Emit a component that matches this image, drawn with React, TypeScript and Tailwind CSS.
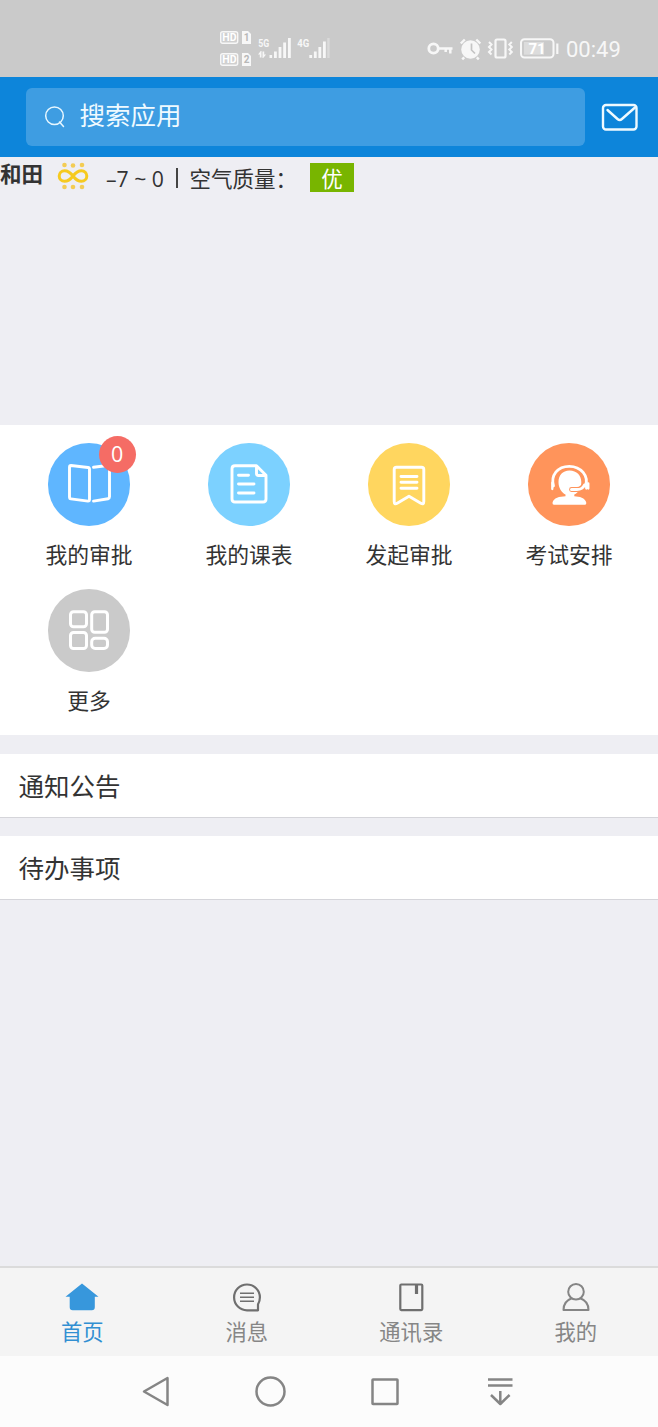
import React from 'react';

const Signals: React.FC = () => (
  <svg viewBox="218 28 114 40" width={114} height={40} fill="#f7f7f7" fontFamily="Roboto, sans-serif" fontWeight={700}>
    {[31, 53].map((y, i) => (
      <g key={y}>
        <rect x={220.7} y={y + 0.7} width={17} height={11.6} rx={2} fill="#d0d0d0" stroke="#f7f7f7" strokeWidth={1.4} />
        <text x={222.3} y={y + 10.4} fontSize={10.5} fill="#fff">HD</text>
        <path d={`M242 ${y}h6l3 3v10h-9z`} />
        <text x={243.7} y={y + 10.4} fontSize={10} fill="#b8b8b8">{i + 1}</text>
      </g>
    ))}
    <text x={258.3} y={46.5} fontSize={10.5} textLength={11} lengthAdjust="spacingAndGlyphs">5G</text>
    <text x={297.3} y={46.5} fontSize={10.5} textLength={12} lengthAdjust="spacingAndGlyphs">4G</text>
    <path d="M258 54.500l2.700-3.500h.8v6.500h-1.700v-3zM262.500 51.500h1.700v3h1.900l-2.900 3.500h-.7z" />
    <path d="M269.5 55h2.600v3h-2.600zM274 51.500h2.800V58H274zM278.600 47h2.800v11h-2.800zM283.200 42.500h2.800V58h-2.800zM288 38h2.800v20H288z" />
    <path d="M309.300 55h2.800v3h-2.800zM313.900 51.500h2.800V58h-2.800zM318.400 47h2.800v11h-2.800zM323 41.500h2.800V58H323z" />
    <path d="M327.200 38h2.400v20h-2.400z" fill="#dadada" />
  </svg>
);

const DeviceIcons: React.FC = () => (
  <svg viewBox="426 36 136 26" width={136} height={26} fill="none" stroke="#f7f7f7" strokeWidth={2.2}>
    <circle cx={433.5} cy={48.5} r={4.7} strokeWidth={2.8} />
    <path d="M438.5 48.5H452.500M450.300 48.5v5M445.700 48.5v3.500" strokeWidth={2.5} />
    <circle cx={470.5} cy={49.5} r={9.3} fill="#f7f7f7" stroke="none" />
    <path d="M460.8 43.5l4-4M480.300 43.5l-4-4M464.200 57.300l-2 2M476.800 57.300l2 2" strokeWidth={2.4} />
    <path d="M471.500 43.500v6.500l3.500 3.500" stroke="#c4c4c4" strokeWidth={1.7} />
    <rect x={495.5} y={39.5} width={10} height={18} rx={1.5} />
    <path d="M489 42l2.500 2.500-2.500 2.500 2.500 2.500-2.500 2.500 2.500 2.500M511.800 42l-2.500 2.500 2.500 2.500-2.500 2.500 2.500 2.500-2.500 2.500" strokeWidth={2} />
    <rect x={521} y={39.2} width={32.5} height={18.3} rx={3.5} strokeWidth={2} />
    <path d="M524 42h20v12.700h-20z" fill="#dcdcdc" stroke="none" />
    <path d="M557.300 43.500v10.500" />
    <text x={528.5} y={54} fill="#fff" stroke="none" fontFamily="Roboto, sans-serif" fontSize={15} fontWeight={700}>71</text>
  </svg>
);

const Sun: React.FC = () => (
  <svg viewBox="0 0 32 28" width={32} height={28} fill="none" stroke="#f6ca1f" strokeWidth={3}>
    <path d="M16 14c-3-4-5.500-5.300-8.500-5.300a5.300 5.300 0 0 0 0 10.600c3 0 5.500-1.300 8.500-5.300s5.500-5.300 8.500-5.300a5.300 5.300 0 0 1 0 10.600c-3 0-5.500-1.300-8.500-5.300z" />
    <g fill="#f3cc53" stroke="none">
      <circle cx={7.5} cy={3} r={2.3} />
      <circle cx={16} cy={3.5} r={2.3} />
      <circle cx={25} cy={3} r={2.3} />
      <circle cx={7.5} cy={25} r={2.3} />
      <circle cx={16} cy={25} r={2.3} />
      <circle cx={25} cy={25} r={2.3} />
    </g>
  </svg>
);

// App icons share an 82px canvas, the same size as their circle
const apps = [
  {
    name: '我的审批',
    color: 'bg-[#5fb6ff]',
    badge: '0',
    icon: (
      <>
        <path d="M23 22.5l17 2q1.500.2 1.500 1.800v30q0 1.800-1.500 1.800l-17-2.200q-1.500-.2-1.500-2V24.300q0-1.800 1.500-1.800z" />
        <path d="M45.500 24.300l14-1.800q2-.2 2 1.800v29.500q0 1.600-1.500 2l-14.500 2.300" />
      </>
    ),
  },
  {
    name: '我的课表',
    color: 'bg-[#7cd1ff]',
    icon: (
      <>
        <path d="M27 22.700h21.500l9.500 9.500V56q0 3-3 3H27q-3 0-3-3V25.700q0-3 3-3zM48.500 23v7.500q0 2 2 2H58" />
        <path d="M30.500 32.200h10M30.500 41h15.500M30.500 50h15.500" />
      </>
    ),
  },
  {
    name: '发起审批',
    color: 'bg-[#ffd65f]',
    icon: (
      <>
        <path d="M28.500 24.300h25q2.300 0 2.300 2.300v32q0 3.500-3 1.700L41 53.300l-11.800 7q-3 1.700-3-1.700v-32q0-2.300 2.300-2.300z" />
        <path d="M33 33.500h16M33 39.300h16M33 45.300h16" />
      </>
    ),
  },
  {
    name: '考试安排',
    color: 'bg-[#ff945b]',
    icon: (
      <>
        <path
          d="M41.500 27.500c-7 0-11 5-11 11.500 0 6 3 10.500 7 12.500v1.700c-6 .3-12 1.500-13 6.500q-.2 2 1.500 2h31q1.500 0 1.300-2c-1-5-7-6.300-12-6.500v-1.700c4.500-2 7-6.500 7-12.500 0-6.500-4.500-11.500-11.800-11.500z"
          fill="white"
          stroke="none"
        />
        <path d="M54 44.200q-2 2.300-5 2.300H43.500" strokeWidth={4.8} stroke="#ff945b" />
        <path d="M56.500 42q-2 4.500-7.500 4.500H43.500" strokeWidth={3} />
        <path d="M25.500 43c-3-10.500 4-19.700 15.800-19.700S61 33 57.500 43" strokeWidth={2.8} />
        <path d="M24.300 40v6M58.300 39.500v6M60.300 40.500v5" strokeWidth={2.3} />
      </>
    ),
  },
  {
    name: '更多',
    color: 'bg-[#cacaca]',
    icon: (
      <g strokeWidth={3}>
        <rect x={22.5} y={22.7} width={16} height={15} rx={3} />
        <rect x={43.7} y={22.7} width={15.8} height={20.5} rx={3} />
        <rect x={22.5} y={43.5} width={16} height={16} rx={3} />
        <rect x={43.7} y={49.2} width={15.8} height={10.3} rx={3.5} />
      </g>
    ),
  },
];

const tabs = [
  {
    name: '首页',
    color: 'text-[#318fd2]',
    icon: <path d="M17 1.5l16.500 13.300h-3.700v10.500q0 3-3 3H7.700q-3 0-3-3V14.800H.5z" fill="#3797dc" stroke="none" />,
  },
  {
    name: '消息',
    color: 'text-[#868686]',
    icon: (
      <g strokeWidth={2.2}>
        <path d="M17 28.300A12.900 12.900 0 1 1 29.900 15.300q0 4-1.900 7v6z" />
        <path d="M10 11.300h14M10 15.300h14M10 19.300h14" strokeWidth={1.5} />
      </g>
    ),
  },
  {
    name: '通讯录',
    color: 'text-[#868686]',
    icon: (
      <>
        <rect x={6.3} y={2.5} width={22} height={25.6} rx={1} strokeWidth={2.2} />
        <path d="M22.500 3v9" strokeWidth={3.2} />
      </>
    ),
  },
  {
    name: '我的',
    color: 'text-[#868686]',
    icon: (
      <g strokeWidth={2} stroke="#858585">
        <circle cx={17} cy={9.8} r={7.8} />
        <path d="M12.800 16.300q-8.300 3-8.300 11.700h25q0-8.700-8.300-11.700" />
      </g>
    ),
  },
];

const notices = ['通知公告', '待办事项'];

const App: React.FC = () => {
  return (
    <div className="flex h-[1427px] w-[658px] flex-col overflow-hidden bg-[#eeeef3] font-['Noto_Sans_CJK_SC',sans-serif] text-[#333]">
      {/* Status bar */}
      <div className="flex h-[77px] shrink-0 items-start bg-[#cacaca] pl-[218px]">
        <div className="mt-7">
          <Signals />
        </div>
        <div className="ml-[94px] mt-9">
          <DeviceIcons />
        </div>
        <span className="ml-1 mt-9 font-['Roboto',sans-serif] text-[22px] leading-7 text-[#f7f7f7]">00:49</span>
      </div>

      {/* Search header */}
      <header className="flex h-20 shrink-0 items-center bg-[#0d85da] pl-[25.5px]">
        <div className="flex h-[58px] w-[559px] items-center rounded-md bg-[#3e9de2] pl-[18px]">
          <svg width={22} height={22} viewBox="0 0 22 22" fill="none" stroke="#e7f7ff" strokeWidth={1.5} strokeLinecap="round">
            <circle cx={10.5} cy={9.8} r={8.8} />
            <path d="M15.500 16l4 4.500" />
          </svg>
          <span className="-mt-1.5 ml-3.5 text-[25.5px] leading-9 text-[#effaff]">搜索应用</span>
        </div>
        <svg className="ml-4" width={38} height={30} viewBox="0 0 38 30" fill="none" stroke="#effaff" strokeWidth={2.4} strokeLinecap="round" strokeLinejoin="round">
          <rect x={2} y={3} width={33.5} height={24.5} rx={3} />
          <path d="M6.500 8l10 9q2.200 2 4.400 0L34 5.500" />
        </svg>
      </header>

      {/* Weather */}
      <div className="flex h-[268px] shrink-0 items-start whitespace-nowrap text-[21.5px] leading-8">
        <span className="w-[43px] font-bold">和田</span>
        <div className="ml-3.5 mt-[5px]">
          <Sun />
        </div>
        <span className="ml-[17px] mt-1.5 w-[58px] font-['Open_Sans',sans-serif] text-[21.2px]">–7 ~ 0</span>
        <span className="ml-3 mt-[11px] h-5 w-[1.5px] bg-[#444]" />
        <span className="ml-3 mt-[5px] w-[120.5px]">空气质量：</span>
        <span className="mt-1.5 flex h-[29px] w-11 items-center justify-center bg-[#78b500] text-white">优</span>
      </div>

      {/* Apps */}
      <div className="grid h-[310px] shrink-0 grid-cols-4 content-start bg-white px-[9px] pt-[18px]">
        {apps.map((app) => (
          <div key={app.name} className="flex h-[146px] flex-col items-center">
            <div className={`relative h-[82.5px] w-[82.5px] rounded-full ${app.color}`}>
              <svg width={82} height={82} viewBox="0 0 82 82" fill="none" stroke="white" strokeWidth={2.9} strokeLinecap="round" strokeLinejoin="round">
                {app.icon}
              </svg>
              {app.badge && (
                <span className="absolute -top-[7px] left-[51px] flex h-[37px] w-[37px] items-center justify-center rounded-full bg-[#f56c65] font-['Open_Sans',sans-serif] text-[21.5px] text-white">
                  {app.badge}
                </span>
              )}
            </div>
            <span className="mt-[12.5px] text-[21.8px] leading-8">{app.name}</span>
          </div>
        ))}
      </div>

      {/* Notices */}
      {notices.map((title) => (
        <div key={title} className="-mb-px mt-[19px] flex h-16 shrink-0 items-center border-b border-[#d5d5da] bg-white pl-[18.5px] text-[25.5px]">
          {title}
        </div>
      ))}

      {/* Tabs */}
      <nav className="mt-auto grid h-[90px] shrink-0 grid-cols-4 border-t-2 border-[#dbdbdb] bg-[#f4f4f4]">
        {tabs.map((tab) => (
          <div key={tab.name} className={`flex flex-col items-center pt-3.5 ${tab.color}`}>
            <svg width={34} height={31} viewBox="0 0 34 31" fill="none" stroke="#6f6f6f" strokeWidth={2} strokeLinejoin="round">
              {tab.icon}
            </svg>
            <span className="mt-[2px] text-[21.3px] leading-8">{tab.name}</span>
          </div>
        ))}
      </nav>

      {/* System navigation */}
      <div className="flex h-[71px] shrink-0 bg-[#fcfcfc] pl-[140px] pt-5">
        <svg width={380} height={32} viewBox="140 1376 380 32" fill="none" stroke="#858585" strokeWidth={2.5} strokeLinejoin="round">
          <path d="M167.500 1378v27L144 1391.500z" />
          <circle cx={270.5} cy={1391.5} r={14} />
          <rect x={372.5} y={1379.5} width={25} height={24.5} rx={0.5} />
          <path d="M488 1379.500h24.500M488 1385.500h24.500M500.300 1391v13M491 1395l9.300 9 9.300-9" />
        </svg>
      </div>
    </div>
  );
};

export default App;
